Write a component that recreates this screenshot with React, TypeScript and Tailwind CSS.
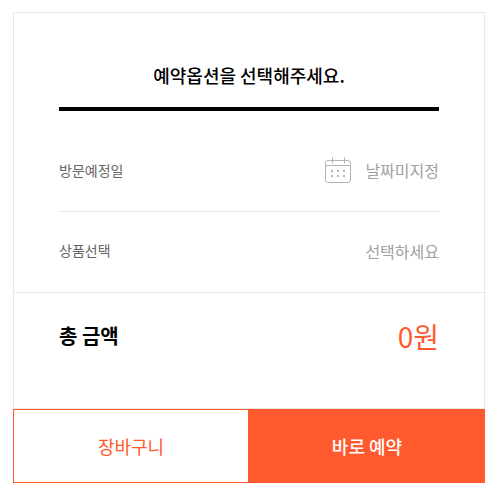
const font = { fontFamily: '"Noto Sans CJK KR", sans-serif' };

function CalendarIcon() {
  return (
    <svg width="27" height="27" viewBox="0 0 27 27" fill="none" stroke="#b5b5b5" strokeWidth="1">
      <rect x="0.5" y="3.5" width="25" height="22" rx="2.5" />
      <path d="M0.5 8.5H25.5M7.5 0.5V6.5M19.5 0.5V6.5" />
      <g fill="#b5b5b5" stroke="none">
        <rect x="6" y="13" width="2" height="2" />
        <rect x="12" y="13" width="2" height="2" />
        <rect x="18" y="13" width="2" height="2" />
        <rect x="6" y="18" width="2" height="2" />
        <rect x="12" y="18" width="2" height="2" />
        <rect x="18" y="18" width="2" height="2" />
      </g>
    </svg>
  );
}

export default function App() {
  return (
    <div className="w-[497px] h-[494px] bg-white pt-3 pl-[13px]" style={font}>
      <div className="w-[472px] border border-[#e8e8e8]">
        <div className="px-[45px]">
          <h2 className="h-[98px] pt-[49px] border-b-4 border-black text-center text-[18px] leading-[26px] font-medium text-black">
            예약옵션을 선택해주세요.
          </h2>
          <div className="h-[101px] pt-[18px] flex items-center justify-between border-b border-[#e8e8e8]">
            <span className="text-[14px] text-[#666666]">방문예정일</span>
            <div className="flex items-center gap-[13px]">
              <CalendarIcon />
              <span className="text-[16px] text-[#a0a0a0]">날짜미지정</span>
            </div>
          </div>
          <div className="h-[80px] pb-[3px] flex items-center justify-between">
            <span className="text-[14px] text-[#666666]">상품선택</span>
            <span className="text-[16px] text-[#a0a0a0]">선택하세요</span>
          </div>
        </div>
        <div className="h-[116px] px-[45px] border-t border-[#e8e8e8] flex items-center justify-between pb-[30px]">
          <span className="text-[20px] font-bold text-black">총 금액</span>
          <span className="text-[28px] text-[#ff5a2e]">0원</span>
        </div>
      </div>
      <div className="w-[472px] h-[74px] flex">
        <button className="w-[236px] border border-[#ff5a2e] bg-white text-[18px] text-[#ff5a2e]">장바구니</button>
        <button className="flex-1 bg-[#ff5a2e] text-[18px] font-medium text-white">바로 예약</button>
      </div>
    </div>
  );
}
